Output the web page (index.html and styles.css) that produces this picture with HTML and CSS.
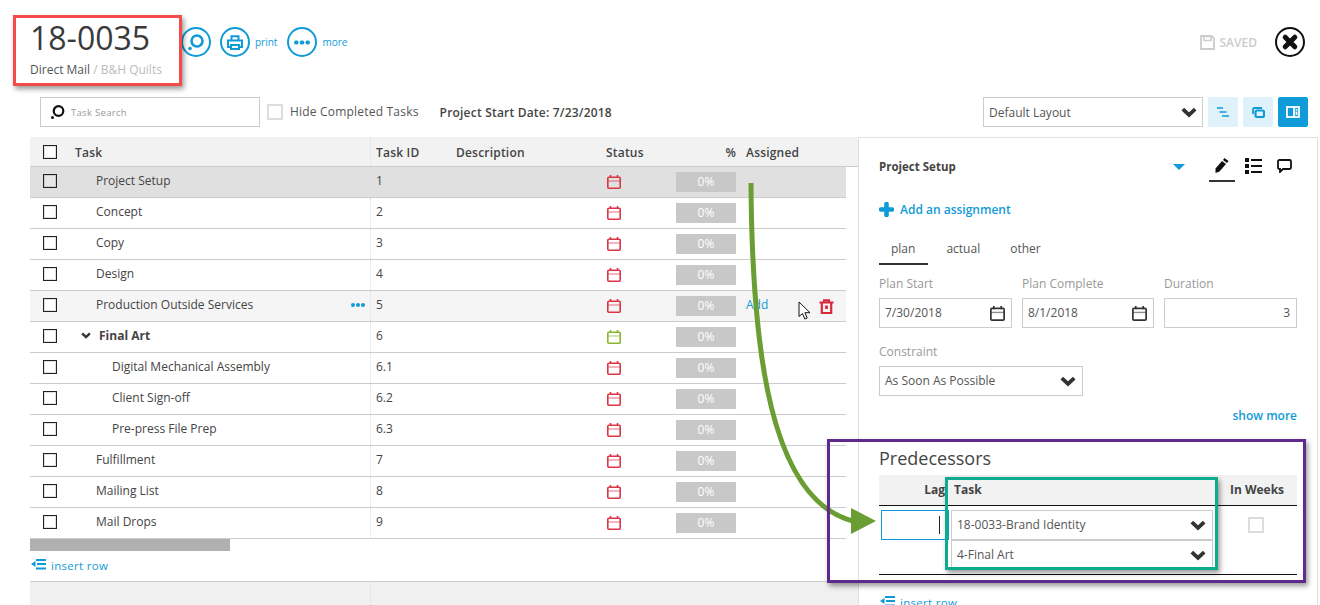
FILE: index.html
```html
<!DOCTYPE html>
<html lang="en">
<head>
<meta charset="utf-8">
<title>18-0035</title>
<link rel="stylesheet" href="styles.css">
</head>
<body>
<svg class="defs" width="0" height="0" aria-hidden="true">
  <symbol id="cal" viewBox="0 0 14 14">
    <path d="M3.500 0v3M10.500 0v3" fill="none" stroke="currentColor" stroke-width="1.600"/>
    <rect x="0.800" y="2.300" width="12.400" height="10.900" rx="1" fill="none" stroke="currentColor" stroke-width="1.600"/>
    <path d="M1 6h12" stroke="currentColor" stroke-width="1.300" opacity=".55"/>
  </symbol>
  <symbol id="chev" viewBox="0 0 16 11">
    <path d="M1.800 2.200 8 8l6.200-5.800" fill="none" stroke="currentColor" stroke-width="3.800"/>
  </symbol>
  <symbol id="dots" viewBox="0 0 14 4">
    <circle cx="2" cy="2" r="2" fill="currentColor"/><circle cx="7" cy="2" r="2" fill="currentColor"/><circle cx="12" cy="2" r="2" fill="currentColor"/>
  </symbol>
  <symbol id="ins" viewBox="0 0 15 12">
    <path d="M5 1h10M6 5h9M5 9.500h10" stroke="currentColor" stroke-width="2"/>
    <path d="M0 5l4.500-3v6z" fill="currentColor"/>
  </symbol>
</svg>

<header class="top">
  <div class="title-block">
    <div class="job-no">18-0035</div>
    <div class="job-sub">Direct Mail <span class="job-client">/ B&amp;H Quilts</span></div>
  </div>
  <div class="top-actions">
    <span class="ring">
      <svg width="18" height="18" viewBox="0 0 18 18"><circle cx="10" cy="8" r="5.500" fill="none" stroke="currentColor" stroke-width="2.600"/><circle cx="3" cy="15.500" r="1.800" fill="currentColor"/></svg>
    </span>
    <span class="ring ring-gap">
      <svg width="16" height="15" viewBox="0 0 16 15"><path d="M4.500 5V1.200h7V5M3.500 12H1V5.500h14V12h-2.500" fill="none" stroke="currentColor" stroke-width="2"/><path d="M4 10h8v4H4z" fill="none" stroke="currentColor" stroke-width="2"/></svg>
    </span>
    <span class="ring-label">print</span>
    <span class="ring ring-gap2">
      <svg class="ring-dots" width="16" height="5" viewBox="0 0 14 4"><use href="#dots"/></svg>
    </span>
    <span class="ring-label">more</span>
  </div>
  <div class="top-right">
    <svg class="save-ico" width="15" height="15" viewBox="0 0 15 15"><path d="M1 1h10.500L14 3.500V14H1z" fill="none" stroke="currentColor" stroke-width="1.800"/><path d="M4 1.500h7v4H4z" fill="none" stroke="currentColor" stroke-width="1.500"/></svg>
    <span class="saved">SAVED</span>
    <span class="close">
      <svg width="18" height="18" viewBox="0 0 18 18"><path d="M4.200 4.200l9.600 9.600M13.800 4.200l-9.600 9.600" stroke="currentColor" stroke-width="5" stroke-linecap="round"/></svg>
    </span>
  </div>
</header>

<div class="toolbar">
  <div class="search">
    <svg width="16" height="16" viewBox="0 0 16 16"><circle cx="8.500" cy="7" r="4.800" fill="none" stroke="#111" stroke-width="2.200"/><circle cx="2.500" cy="13.500" r="1.500" fill="#111"/></svg>
    <span>Task Search</span>
  </div>
  <span class="soft-check"></span>
  <span class="hide-label">Hide Completed Tasks</span>
  <span class="start-date">Project Start Date: 7/23/2018</span>
  <div class="layout-select">
    <span>Default Layout</span>
    <svg class="chev" width="16" height="11"><use href="#chev"/></svg>
  </div>
  <span class="tool tool-first">
    <svg width="12" height="10" viewBox="0 0 12 10"><path d="M0 1h6M2.500 5h7M5 9h7" stroke="currentColor" stroke-width="1.600"/></svg>
  </span>
  <span class="tool">
    <svg width="13" height="11" viewBox="0 0 13 11"><path d="M1 7V2.500C1 1.700 1.700 1 2.500 1H10" fill="none" stroke="currentColor" stroke-width="1.800"/><rect x="3.500" y="3.500" width="8.500" height="6.500" rx="1.500" fill="none" stroke="currentColor" stroke-width="2.200"/></svg>
  </span>
  <span class="tool tool-on">
    <svg width="14" height="12" viewBox="0 0 14 12"><rect x="1" y="1" width="12" height="10" fill="none" stroke="currentColor" stroke-width="1.800"/><path d="M8 1v10" stroke="currentColor" stroke-width="1.800"/><path d="M10.500 3v1.500M10.500 5.500v3.500" stroke="currentColor" stroke-width="1.800"/></svg>
  </span>
</div>

<main class="main">
  <section class="grid">
    <div class="row head">
      <span class="c-check"><i class="box"></i></span>
      <span class="c-task">Task</span>
      <span class="c-id">Task ID</span>
      <span class="c-desc">Description</span>
      <span class="c-status">Status</span>
      <span class="c-pct">%</span>
      <span class="c-asg">Assigned</span>
    </div>

    <div class="row sel">
      <span class="c-check"><i class="box"></i></span>
      <span class="c-task l1">Project Setup</span>
      <span class="c-id">1</span><span class="c-desc"></span>
      <span class="c-status late"><svg width="14" height="14"><use href="#cal"/></svg></span>
      <span class="c-pct"><b class="bar">0%</b></span><span class="c-asg"></span>
    </div>
    <div class="row">
      <span class="c-check"><i class="box"></i></span>
      <span class="c-task l1">Concept</span>
      <span class="c-id">2</span><span class="c-desc"></span>
      <span class="c-status late"><svg width="14" height="14"><use href="#cal"/></svg></span>
      <span class="c-pct"><b class="bar">0%</b></span><span class="c-asg"></span>
    </div>
    <div class="row">
      <span class="c-check"><i class="box"></i></span>
      <span class="c-task l1">Copy</span>
      <span class="c-id">3</span><span class="c-desc"></span>
      <span class="c-status late"><svg width="14" height="14"><use href="#cal"/></svg></span>
      <span class="c-pct"><b class="bar">0%</b></span><span class="c-asg"></span>
    </div>
    <div class="row">
      <span class="c-check"><i class="box"></i></span>
      <span class="c-task l1">Design</span>
      <span class="c-id">4</span><span class="c-desc"></span>
      <span class="c-status late"><svg width="14" height="14"><use href="#cal"/></svg></span>
      <span class="c-pct"><b class="bar">0%</b></span><span class="c-asg"></span>
    </div>
    <div class="row hover">
      <span class="c-check"><i class="box"></i></span>
      <span class="c-task l1">Production Outside Services<svg class="row-dots" width="14" height="4"><use href="#dots"/></svg></span>
      <span class="c-id">5</span><span class="c-desc"></span>
      <span class="c-status late"><svg width="14" height="14"><use href="#cal"/></svg></span>
      <span class="c-pct"><b class="bar">0%</b></span>
      <span class="c-asg"><span class="add">Add</span>
        <svg class="trash" width="15" height="15" viewBox="0 0 15 15"><path d="M0.500 3.500h14M5 3V1.200h5V3" fill="none" stroke="currentColor" stroke-width="2"/><path d="M2.800 3.500V14h9.400V3.500" fill="none" stroke="currentColor" stroke-width="2.200"/><path d="M7.500 6.500v3.500" stroke="currentColor" stroke-width="2.800"/></svg>
      </span>
    </div>
    <div class="row">
      <span class="c-check"><i class="box"></i></span>
      <span class="c-task parent"><svg class="tw" width="10" height="7" viewBox="0 0 16 11"><use href="#chev"/></svg>Final Art</span>
      <span class="c-id">6</span><span class="c-desc"></span>
      <span class="c-status ok"><svg width="14" height="14"><use href="#cal"/></svg></span>
      <span class="c-pct"><b class="bar">0%</b></span><span class="c-asg"></span>
    </div>
    <div class="row">
      <span class="c-check"><i class="box"></i></span>
      <span class="c-task l2">Digital Mechanical Assembly</span>
      <span class="c-id">6.1</span><span class="c-desc"></span>
      <span class="c-status late"><svg width="14" height="14"><use href="#cal"/></svg></span>
      <span class="c-pct"><b class="bar">0%</b></span><span class="c-asg"></span>
    </div>
    <div class="row">
      <span class="c-check"><i class="box"></i></span>
      <span class="c-task l2">Client Sign-off</span>
      <span class="c-id">6.2</span><span class="c-desc"></span>
      <span class="c-status late"><svg width="14" height="14"><use href="#cal"/></svg></span>
      <span class="c-pct"><b class="bar">0%</b></span><span class="c-asg"></span>
    </div>
    <div class="row">
      <span class="c-check"><i class="box"></i></span>
      <span class="c-task l2">Pre-press File Prep</span>
      <span class="c-id">6.3</span><span class="c-desc"></span>
      <span class="c-status late"><svg width="14" height="14"><use href="#cal"/></svg></span>
      <span class="c-pct"><b class="bar">0%</b></span><span class="c-asg"></span>
    </div>
    <div class="row">
      <span class="c-check"><i class="box"></i></span>
      <span class="c-task l1">Fulfillment</span>
      <span class="c-id">7</span><span class="c-desc"></span>
      <span class="c-status late"><svg width="14" height="14"><use href="#cal"/></svg></span>
      <span class="c-pct"><b class="bar">0%</b></span><span class="c-asg"></span>
    </div>
    <div class="row">
      <span class="c-check"><i class="box"></i></span>
      <span class="c-task l1">Mailing List</span>
      <span class="c-id">8</span><span class="c-desc"></span>
      <span class="c-status late"><svg width="14" height="14"><use href="#cal"/></svg></span>
      <span class="c-pct"><b class="bar">0%</b></span><span class="c-asg"></span>
    </div>
    <div class="row">
      <span class="c-check"><i class="box"></i></span>
      <span class="c-task l1">Mail Drops</span>
      <span class="c-id">9</span><span class="c-desc"></span>
      <span class="c-status late"><svg width="14" height="14"><use href="#cal"/></svg></span>
      <span class="c-pct"><b class="bar">0%</b></span><span class="c-asg"></span>
    </div>

    <div class="hscroll"></div>
    <div class="insert grid-insert">
      <svg width="15" height="12"><use href="#ins"/></svg><span>insert row</span>
    </div>
    <div class="grid-foot"><span class="foot-sep"></span></div>
  </section>

  <aside class="panel">
    <div class="p-head">
      <span class="p-title">Project Setup</span>
      <i class="tri"></i>
      <span class="p-tab p-tab-on">
        <svg width="16" height="17" viewBox="0 0 16 17"><path d="M10.500 1l4 3-1.500 2-4-3zM8 4l4 3-6.500 7.500L1.500 16l0-4.500z" fill="#111"/></svg>
      </span>
      <span class="p-tab">
        <svg width="17" height="16" viewBox="0 0 17 16"><path d="M0 0h4v4H0zM0 6h4v4H0zM0 12h4v4H0z" fill="#111"/><path d="M6 2h11M6 8h11M6 14h11" stroke="#111" stroke-width="2"/></svg>
      </span>
      <span class="p-tab p-tab-last">
        <svg width="15" height="14" viewBox="0 0 15 14"><path d="M2.500 1h10c.8 0 1.500.7 1.500 1.500v6c0 .8-.7 1.500-1.500 1.500H6l-3 3v-3h-.5C1.700 10 1 9.300 1 8.500v-6C1 1.700 1.700 1 2.500 1z" fill="none" stroke="#111" stroke-width="1.800"/></svg>
      </span>
    </div>

    <div class="assign">
      <svg width="15" height="15" viewBox="0 0 15 15"><path d="M7.500 2v11M2 7.500h11" stroke="currentColor" stroke-width="4.600" stroke-linecap="round"/></svg>
      <span>Add an assignment</span>
    </div>

    <div class="tabs">
      <span class="tab tab-on">plan</span>
      <span class="tab">actual</span>
      <span class="tab">other</span>
    </div>

    <div class="fields">
      <div>
        <div class="f-label">Plan Start</div>
        <div class="input"><span>7/30/2018</span><svg class="f-cal" width="15" height="15"><use href="#cal"/></svg></div>
      </div>
      <div>
        <div class="f-label">Plan Complete</div>
        <div class="input"><span>8/1/2018</span><svg class="f-cal" width="15" height="15"><use href="#cal"/></svg></div>
      </div>
      <div>
        <div class="f-label">Duration</div>
        <div class="input input-end"><span>3</span></div>
      </div>
    </div>

    <div class="f-label f-label-gap">Constraint</div>
    <div class="input constraint"><span>As Soon As Possible</span><svg class="chev" width="16" height="11"><use href="#chev"/></svg></div>

    <div class="show-more">show more</div>

    <h2 class="pred-title">Predecessors</h2>
    <div class="pred">
      <div class="pred-head">
        <span class="ph-lag">Lag</span>
        <span class="ph-task">Task</span>
        <span class="ph-wk">In Weeks</span>
      </div>
      <div class="pred-body">
        <div class="lag-cell"><div class="lag-input"><i class="caret"></i></div></div>
        <div class="pred-selects">
          <div class="input pselect"><span>18-0033-Brand Identity</span><svg class="chev" width="16" height="11"><use href="#chev"/></svg></div>
          <div class="input pselect"><span>4-Final Art</span><svg class="chev" width="16" height="11"><use href="#chev"/></svg></div>
        </div>
        <div class="wk-cell"><span class="soft-check"></span></div>
      </div>
    </div>
    <div class="insert pred-insert">
      <svg width="15" height="12"><use href="#ins"/></svg><span>insert row</span>
    </div>
  </aside>
</main>

<svg class="arrow" width="1320" height="605" viewBox="0 0 1320 605" aria-hidden="true">
  <path d="M751 183C752 350 770 500 853 521" fill="none" stroke="#6a9e35" stroke-width="5"/>
  <path d="M851 508l25 13-25 13z" fill="#6a9e35"/>
</svg>
<svg class="pointer" width="14" height="20" viewBox="0 0 14 20" aria-hidden="true">
  <path d="M1 1v14.500l3.500-3 2.300 5.500 2.400-1-2.300-5.300H12z" fill="#fff" stroke="#111" stroke-width="1"/>
</svg>
<div class="mark mark-red"></div>
<div class="mark mark-purple"></div>
<div class="mark mark-teal"></div>
</body>
</html>
```
FILE: styles.css
```css
* { box-sizing: border-box; }
html, body { margin: 0; padding: 0; }
body {
  position: relative;
  width: 1320px;
  height: 605px;
  overflow: hidden;
  background: #fff;
  color: #444;
  font-family: "Open Sans", "Liberation Sans", sans-serif;
  font-size: 12px;
}
.defs { position: absolute; }

/* top bar */
.top {
  display: flex;
  align-items: flex-start;
  height: 97px;
  padding: 0 15px 0 30px;
}
.title-block { width: 151px; padding-top: 17px; }
.job-no { font-size: 32px; line-height: 42px; color: #3a3a3a; }
.job-sub { font-size: 12px; line-height: 18px; margin-top: 2px; color: #555; }
.job-client { color: #bbb; }
.top-actions { display: flex; align-items: center; margin-top: 27px; color: #0f9bd7; }
.ring {
  display: flex; align-items: center; justify-content: center;
  width: 30px; height: 30px;
  border: 2px solid #0f9bd7; border-radius: 50%;
}
.ring-gap { margin-left: 9px; }
.ring-gap2 { margin-left: 10px; }
.ring-label { font-size: 10px; margin-left: 5px; }
.top-right { display: flex; align-items: center; margin-left: auto; margin-top: 27px; height: 30px; color: #ccc; }
.save-ico { color: #ccc; }
.saved { font-weight: 600; font-size: 12px; margin-left: 5px; }
.close {
  display: flex; align-items: center; justify-content: center;
  width: 30px; height: 30px; margin-left: 18px;
  border: 2px solid #111; border-radius: 50%; color: #111;
}

/* toolbar */
.toolbar { display: flex; align-items: center; height: 30px; padding: 0 12px 0 40px; }
.search {
  display: flex; align-items: center;
  width: 220px; height: 30px; padding-left: 9px;
  border: 1px solid #ccc;
  font-size: 9.500px; color: #999;
}
.search span { margin-left: 5px; letter-spacing: .3px; }
.soft-check { display: block; width: 16px; height: 16px; border: 2px solid #ddd; background: #fff; }
.toolbar .soft-check { margin-left: 7px; margin-top: -1px; }
.hide-label { margin-left: 7px; letter-spacing: .2px; color: #555; margin-top: -1px; }
.start-date { margin-left: 21px; font-weight: 600; letter-spacing: .2px; }
.layout-select {
  display: flex; align-items: center; justify-content: space-between;
  width: 220px; height: 30px; margin-left: auto; padding: 0 5px;
  border: 1px solid #ccc; color: #555;
}
.chev { color: #333; flex: none; }
.tool {
  display: flex; align-items: center; justify-content: center;
  width: 30px; height: 30px; margin-left: 5px;
  background: #dff1fa; color: #0f9bd7; border-radius: 2px;
}
.tool-on { background: #0f9bd7; color: #fff; }

/* main */
.main { display: flex; margin-top: 10px; margin-left: 30px; height: 468px; }
.grid { flex: none; width: 828px; }
.row {
  display: grid;
  grid-template-columns: 45px 295px 86px 150px 70px 60px 110px;
  width: 816px; height: 31px;
  border-bottom: 1px solid #ccc;
}
.row > span { display: flex; align-items: center; height: 30px; padding-bottom: 3px; }
.row.head {
  width: 828px; height: 30px;
  grid-template-columns: 45px 295px 86px 150px 70px 60px 122px;
  background: #f2f2f2; font-weight: 600; letter-spacing: .2px;
}
.row.head > span { height: 29px; padding: 1px 0 0; }
.row.head > .c-check { padding: 0 0 0 13px; }
.row.head > .c-id { padding-left: 5px; }
.row.head > .c-asg { padding-left: 10px; }
.row > .c-check { padding-left: 13px; }
.sel { background: #e0e0e0; }
.hover { background: #f5f5f5; }
.box {
  display: block; width: 14px; height: 14px;
  border: 1px solid #222;
  box-shadow: inset 0 0 0 1px rgba(0,0,0,.12);
  background: #fff;
}
.sel .box { background: #e6e6e6; }
.l1 { padding-left: 21px; }
.l2 { padding-left: 37px; }
.row > .parent { font-weight: 700; padding-left: 6px; }
.row > .l1 { padding-left: 21px; }
.row > .l2 { padding-left: 37px; }
.tw { margin-right: 8px; color: #333; }
.row-dots { margin-left: auto; margin-right: 5px; color: #0f9bd7; }
.c-id { padding-left: 5px; border-left: 1px dotted #ddd; }
.row > .c-id { padding-left: 5px; }
.row > .c-status { padding: 0 0 0 1px; }
.row.head > .c-status { padding: 1px 0 0; }
.late { color: #dc3545; }
.ok { color: #85b72e; }
.row > .c-pct { justify-content: flex-end; padding-bottom: 0; }
.bar {
  display: block; width: 60px; height: 20px;
  background: #c8c8c8; color: #fff; font-weight: 400;
  line-height: 20px; text-align: center;
}
.row > .c-asg { padding-left: 10px; }
.add { color: #0f9bd7; }
.trash { margin-left: auto; margin-right: 12px; color: #d8283a; margin-top: 3px; }
.hscroll { width: 200px; height: 12px; background: #b0b0b0; }
.insert { display: flex; align-items: center; color: #0f9bd7; font-weight: 400; letter-spacing: .3px; }
.insert span { margin-left: 5px; font-size: 11.500px; }
.grid-insert { height: 30px; padding: 0 0 2px 1px; }
.grid-foot { height: 30px; border-top: 1px solid #ccc; background: #f0f0f0; padding-left: 340px; }
.foot-sep { display: block; height: 100%; border-left: 1px dotted #ddd; }

/* right panel */
.panel {
  flex: none; width: 460px; height: 468px; padding: 13px 20px 0;
  border: 1px solid #e0e0e0; border-bottom: 0;
  overflow: hidden;
}
.p-head { display: flex; align-items: center; height: 31px; }
.p-title { font-weight: 700; font-size: 11.500px; color: #444; }
.tri {
  width: 0; height: 0; margin-left: auto; margin-right: 24px;
  border-left: 6px solid transparent; border-right: 6px solid transparent;
  border-top: 6px solid #0f9bd7;
}
.p-tab { display: flex; align-items: center; justify-content: center; height: 31px; width: 26px; margin-right: 5px; padding-bottom: 1px; }
.p-tab-on { border-bottom: 2px solid #333; }
.p-tab-last { margin-right: 0; margin-left: 0; }
.assign { display: flex; align-items: center; height: 18px; margin-top: 18px; color: #0f9bd7; font-weight: 600; }
.assign span { margin-left: 6px; }
.tabs { display: flex; gap: 6px; margin-top: 16px; height: 31px; color: #555; }
.tab { padding: 6px 12px 0; height: 31px; }
.tab-on { border-bottom: 2px solid #333; padding-right: 13px; }
.fields { display: grid; grid-template-columns: 133px 132px 133px; gap: 10px; margin-top: 10px; }
.f-label { height: 18px; line-height: 18px; margin-bottom: 5px; color: #999; }
.f-label-gap { margin-top: 15px; }
.input {
  display: flex; align-items: center; justify-content: space-between;
  height: 30px; padding: 0 6px 0 5px;
  border: 1px solid #ccc; color: #555; background: #fff;
}
.input > span { margin-bottom: 2px; }
.input-end { justify-content: flex-end; }
.f-cal { color: #333; }
.constraint { width: 204px; }
.show-more { height: 18px; margin-top: 11px; line-height: 18px; text-align: right; color: #0f9bd7; font-weight: 600; }
.pred-title { margin: 21px 0 0; height: 24px; line-height: 24px; font-size: 18px; font-weight: 400; color: #444; }
.pred { margin-top: 5px; width: 418px; border-bottom: 1px solid #111; }
.pred-head {
  display: grid; grid-template-columns: 72px 266px 80px; align-items: center;
  height: 31px; padding-bottom: 2px; background: #f2f2f2; border-bottom: 1px solid #111; font-weight: 700; font-size: 12px;
}
.ph-lag { text-align: right; padding-right: 6px; }
.ph-task { padding-left: 3px; }
.ph-wk { text-align: center; }
.pred-body { display: grid; grid-template-columns: 72px 266px 80px; height: 68px; padding-top: 4px; }
.lag-cell { padding-left: 2px; }
.lag-input {
  display: flex; align-items: center; justify-content: flex-end;
  width: 68px; height: 30px; padding-right: 8px;
  border: 1px solid #0f9bd7;
}
.caret { display: block; width: 1px; height: 18px; background: #222; }
.pred-selects { width: 262px; }
.pselect { height: 30px; }
.wk-cell { display: flex; justify-content: center; padding-top: 7px; }
.wk-cell .soft-check { margin-left: -2px; }
.pred-insert { margin-top: 18px; height: 18px; padding-left: 1px; }

/* overlays: annotations on top of the screenshot */
.arrow { position: absolute; left: 0; top: 0; pointer-events: none; }
.pointer { position: absolute; left: 798px; top: 301px; }
.mark { position: absolute; border-style: solid; border-width: 3px; box-shadow: 2px 3px 5px rgba(0,0,0,.4); pointer-events: none; }
.mark-red { left: 13px; top: 15px; width: 169px; height: 71px; border-color: #f44b4b; }
.mark-purple { left: 827px; top: 439px; width: 479px; height: 144px; border-color: #5e2a8e; }
.mark-teal { left: 945px; top: 477px; width: 273px; height: 93px; border-color: #0eab8e; }
```
